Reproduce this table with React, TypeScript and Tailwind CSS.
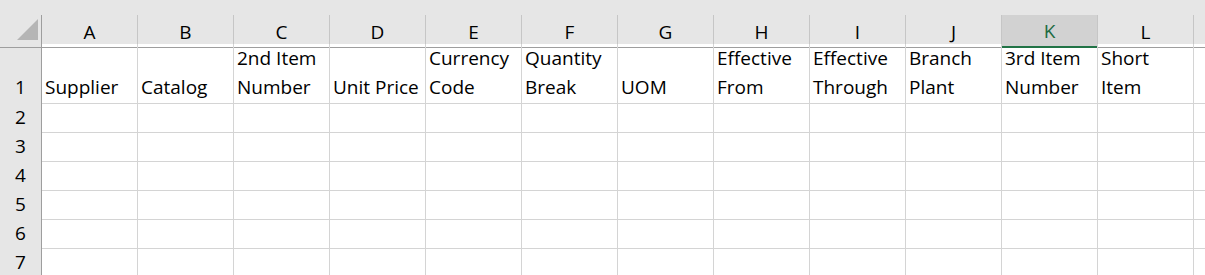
const columns = ["A", "B", "C", "D", "E", "F", "G", "H", "I", "J", "K", "L"];

const headerRow = [
  ["Supplier"],
  ["Catalog"],
  ["2nd Item", "Number"],
  ["Unit Price"],
  ["Currency", "Code"],
  ["Quantity", "Break"],
  ["UOM"],
  ["Effective", "From"],
  ["Effective", "Through"],
  ["Branch", "Plant"],
  ["3rd Item", "Number"],
  ["Short", "Item"],
];

const selectedCol = "K";
const font = { fontFamily: "'Open Sans', 'Noto Sans', sans-serif" };

const gridCols = "grid grid-cols-[42px_repeat(12,96px)_1fr]";

export default function App() {
  return (
    <div className="w-[1205px] h-[275px] overflow-hidden bg-white text-black text-[19px]" style={font}>
      <div className="h-[15px] bg-[#e6e6e6]" />

      {/* column letters */}
      <div className={`${gridCols} h-[29px] bg-[#e6e6e6]`}>
        <div className="relative border-r border-b border-[#9e9e9e]">
          <svg className="absolute left-[17px] top-[4px]" width="22" height="22" viewBox="0 0 22 22">
            <polygon points="0,21 21,21 21,0" fill="#b5b5b5" />
          </svg>
        </div>
        {columns.map((c) =>
          c === selectedCol ? (
            <div
              key={c}
              className="flex items-center justify-center bg-[#d2d2d2] border-r border-[#c6c6c6] border-b-2 border-b-[#217346] text-[#1d6b41] pt-[2px]"
            >
              {c}
            </div>
          ) : (
            <div
              key={c}
              className="flex items-center justify-center border-r border-[#c6c6c6] border-b border-b-[#9e9e9e] pt-[3px]"
            >
              {c}
            </div>
          )
        )}
        <div className="border-b border-[#9e9e9e]" />
      </div>

      {/* row 1: wrapped headings */}
      <div className={`${gridCols} h-[58px] leading-[29px]`}>
        <div className="flex items-end justify-center bg-[#e6e6e6] border-r border-b border-r-[#9e9e9e] border-b-[#c6c6c6] pb-[1px]">
          1
        </div>
        {headerRow.map((lines, i) => (
          <div key={i} className="flex flex-col justify-end border-r border-b border-[#d4d4d4] pl-[3px] pb-[1px] whitespace-nowrap">
            {lines.map((l) => (
              <span key={l}>{l}</span>
            ))}
          </div>
        ))}
        <div className="border-b border-[#d4d4d4]" />
      </div>

      {[2, 3, 4, 5, 6, 7].map((n) => (
        <div key={n} className={`${gridCols} h-[29px]`}>
          <div className="flex items-center justify-center bg-[#e6e6e6] border-r border-b border-r-[#9e9e9e] border-b-[#c6c6c6] pt-[1px]">
            {n}
          </div>
          {columns.map((c) => (
            <div key={c} className="border-r border-b border-[#d4d4d4]" />
          ))}
          <div className="border-b border-[#d4d4d4]" />
        </div>
      ))}
    </div>
  );
}
